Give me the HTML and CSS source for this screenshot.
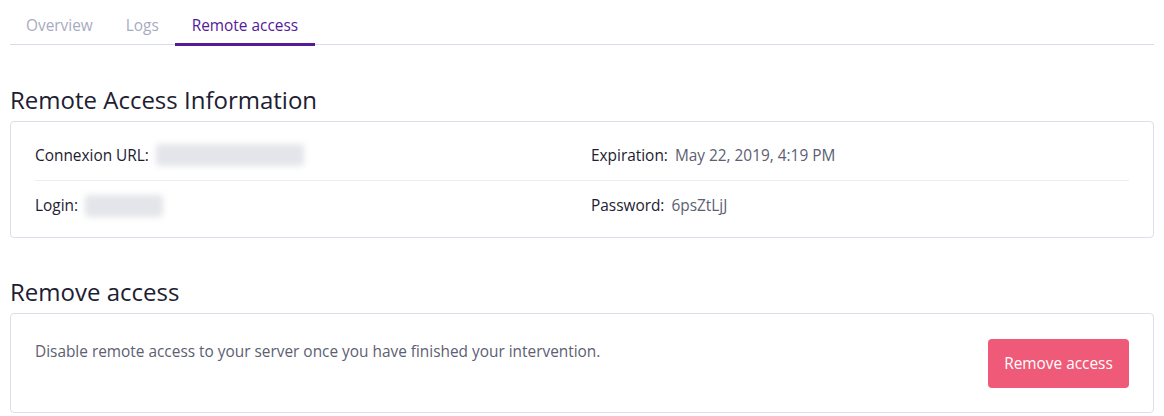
FILE: index.html
```html
<!DOCTYPE html>
<html>
<head>
<meta charset="utf-8">
<link rel="stylesheet" href="styles.css">
</head>
<body>
<div class="page">
  <nav class="tabs">
    <a class="tab">Overview</a>
    <a class="tab">Logs</a>
    <a class="tab active">Remote access</a>
  </nav>

  <h2 class="title first">Remote Access Information</h2>
  <section class="card info">
    <div class="row">
      <div class="cell"><span class="label">Connexion URL:</span><span class="blur wide"></span></div>
      <div class="cell"><span class="label">Expiration:</span><span class="value">May 22, 2019, 4:19 PM</span></div>
    </div>
    <div class="row">
      <div class="cell"><span class="label">Login:</span><span class="blur narrow"></span></div>
      <div class="cell"><span class="label">Password:</span><span class="value">6psZtLjJ</span></div>
    </div>
  </section>

  <h2 class="title">Remove access</h2>
  <section class="card remove">
    <p class="desc">Disable remote access to your server once you have finished your intervention.</p>
    <button class="btn">Remove access</button>
  </section>
</div>
</body>
</html>
```

FILE: styles.css
```css
* { box-sizing: border-box; }
html, body { margin: 0; background: #fff; }
body {
  font-family: "Open Sans", "Noto Sans", sans-serif;
  color: #1d2031;
}
.page { padding: 0 10px; }

.tabs {
  display: flex;
  border-bottom: 1px solid #d9dce8;
  height: 45px;
}
.tab {
  display: flex;
  align-items: center;
  padding: 7px 16.5px 0;
  font-size: 15.4px;
  color: #a8abbf;
  border-bottom: 3px solid transparent;
  margin-bottom: -2px;
}
.tab:first-child { padding-left: 16px; }
.tab.active {
  color: #551a99;
  border-bottom-color: #551a99;
}

.title {
  margin: 38px 0 0;
  font-size: 24px;
  font-weight: 400;
  line-height: 32px;
  color: #1d2031;
  height: 32px;
}
.title.first { margin-top: 39px; }

.card {
  border: 1px solid #dcdfe9;
  border-radius: 4px;
  margin-top: 5px;
}
.info { padding: 8px 24px 7px; }
.row {
  display: grid;
  grid-template-columns: 556px 1fr;
  height: 50px;
  align-items: center;
}
.row + .row { border-top: 1px solid #eceef4; }
.cell { display: flex; align-items: center; }
.label { font-size: 15.4px; color: #1d2031; margin-right: 7px; }
.value { font-size: 15.4px; color: #5c6072; }
.blur {
  display: inline-block;
  height: 22px;
  background: #e4e5ea;
  filter: blur(3px);
  border-radius: 3px;
}
.blur.wide { width: 148px; }
.blur.narrow { width: 78px; }

.remove {
  display: flex;
  align-items: center;
  justify-content: space-between;
  padding: 0 24px;
  height: 100px;
}
.desc {
  margin: 0 0 24px;
  font-size: 15.4px;
  color: #5c6072;
}
.btn {
  font-family: inherit;
  font-size: 15.4px;
  color: #fff;
  background: #ee5a77;
  border: none;
  border-radius: 4px;
  width: 141px;
  height: 49px;
  padding: 0;
}
```
